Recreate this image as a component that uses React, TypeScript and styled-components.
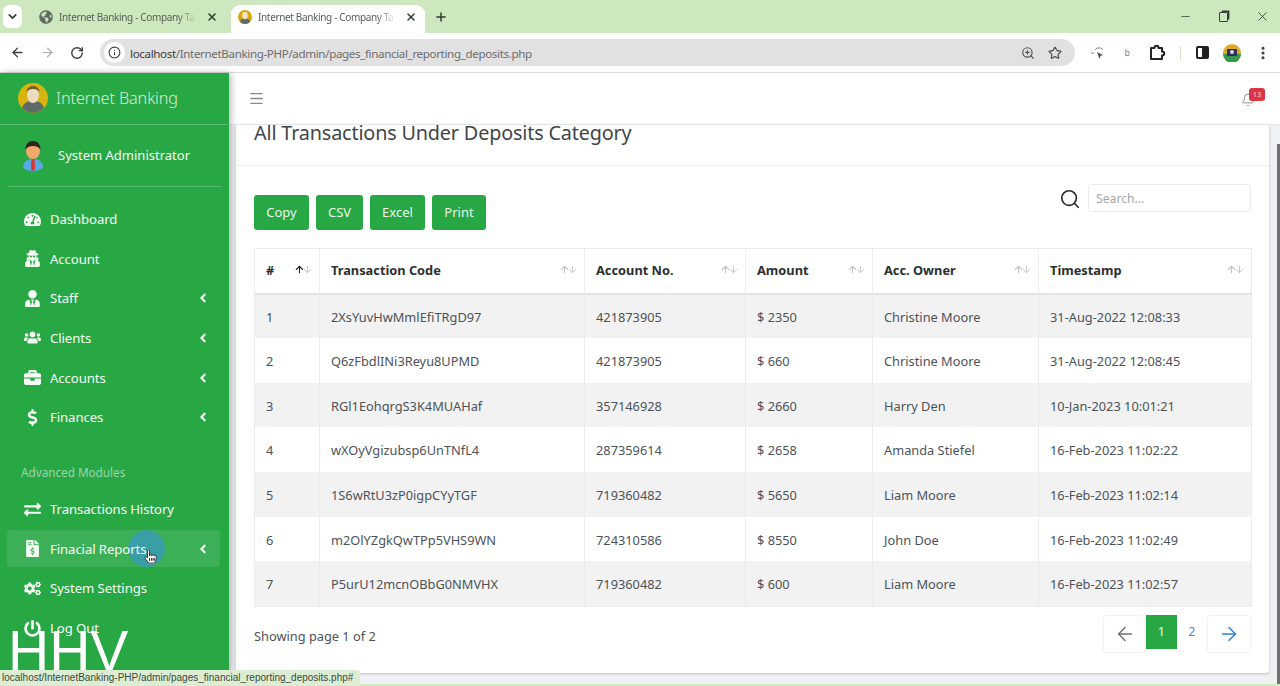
import styled, { createGlobalStyle } from "styled-components";
import {
  ArrowLeft,
  ArrowRight,
  ArrowUp,
  ArrowDown,
  ChevronDown,
  Info,
  Menu,
  Minus,
  MoreVertical,
  Plus,
  RotateCw,
  Search,
  Star,
  X,
  ZoomIn,
  Bell,
} from "lucide-react";
import {
  FaAngleLeft,
  FaBriefcase,
  FaCogs,
  FaDollarSign,
  FaExchangeAlt,
  FaFileInvoiceDollar,
  FaGlobeAmericas,
  FaHandPointer,
  FaPowerOff,
  FaTachometerAlt,
  FaUserSecret,
  FaUserTie,
  FaUsers,
} from "react-icons/fa";

const GlobalStyle = createGlobalStyle`
  html, body { margin: 0; padding: 0; height: 100%; overflow: hidden; background: #fff; }
  #root { height: 100%; }
  * { box-sizing: border-box; }
  body { font-family: "Noto Sans", "Open Sans", sans-serif; }
`;

const rows = [
  ["1", "2XsYuvHwMmlEfiTRgD97", "421873905", "$ 2350", "Christine Moore", "31-Aug-2022 12:08:33"],
  ["2", "Q6zFbdlINi3Reyu8UPMD", "421873905", "$ 660", "Christine Moore", "31-Aug-2022 12:08:45"],
  ["3", "RGl1EohqrgS3K4MUAHaf", "357146928", "$ 2660", "Harry Den", "10-Jan-2023 10:01:21"],
  ["4", "wXOyVgizubsp6UnTNfL4", "287359614", "$ 2658", "Amanda Stiefel", "16-Feb-2023 11:02:22"],
  ["5", "1S6wRtU3zP0igpCYyTGF", "719360482", "$ 5650", "Liam Moore", "16-Feb-2023 11:02:14"],
  ["6", "m2OlYZgkQwTPp5VHS9WN", "724310586", "$ 8550", "John Doe", "16-Feb-2023 11:02:49"],
  ["7", "P5urU12mcnOBbG0NMVHX", "719360482", "$ 600", "Liam Moore", "16-Feb-2023 11:02:57"],
];

const heads = ["#", "Transaction Code", "Account No.", "Amount", "Acc. Owner", "Timestamp"];
const colWidths = [65, 265, 161, 127, 166, 213];

const Page = styled.div`
  height: 686px;
  display: flex;
  flex-direction: column;
  position: relative;
  overflow: hidden;
`;

const TabStrip = styled.div`
  height: 33px;
  flex: none;
  background: #cde7bf;
  display: flex;
  align-items: flex-end;
  padding-left: 3px;
  color: #2b3a2b;
`;

const TabSearch = styled.div`
  width: 19px;
  height: 23px;
  margin-bottom: 5px;
  background: #fff;
  border-radius: 6px;
  display: flex;
  align-items: center;
  justify-content: center;
  margin-right: 9px;
`;

const Tab = styled.div<{ $active?: boolean }>`
  width: ${(p) => (p.$active ? "194px" : "200px")};
  height: 28px;
  display: flex;
  align-items: center;
  padding: 0 0 5px ${(p) => (p.$active ? "7px" : "8px")};
  border-radius: 9px 9px 0 0;
  background: ${(p) => (p.$active ? "#fff" : "transparent")};
`;

const TabTitle = styled.span`
  width: 138px;
  margin-left: 6px;
  margin-right: 9px;
  font-size: 10px;
  letter-spacing: -0.35px;
  color: #555f55;
  white-space: nowrap;
  -webkit-mask-image: linear-gradient(to right, #000 86%, transparent);
  mask-image: linear-gradient(to right, #000 86%, transparent);
`;

const NewTab = styled.div`
  margin: 0 0 9px 9px;
  display: flex;
`;

const WindowControls = styled.div`
  margin-left: auto;
  display: flex;
  align-items: center;
  gap: 24px;
  padding-right: 10px;
  height: 33px;
  align-self: flex-end;
`;

const RestoreIcon = styled.div`
  width: 9px;
  height: 10px;
  border: 1.4px solid #33413a;
  border-radius: 1px;
  box-shadow: 2px -2px 0 -0.6px #33413a;
  margin: 0 3px;
`;

const Toolbar = styled.div`
  height: 40px;
  flex: none;
  background: #fff;
  border-radius: 8px 8px 0 0;
  border-bottom: 1px solid #dcdcdc;
  display: flex;
  align-items: center;
  padding: 0 9px;
  color: #3d3d3d;
`;

const NavIcon = styled.div<{ $w?: number; $muted?: boolean }>`
  width: ${(p) => p.$w ?? 16}px;
  display: flex;
  justify-content: center;
  color: ${(p) => (p.$muted ? "#a8a8a8" : "#3d3d3d")};
  flex: none;
`;

const AddressBar = styled.div`
  width: 975px;
  height: 27px;
  margin-left: 15px;
  background: #e1e1e1;
  border-radius: 14px;
  display: flex;
  align-items: center;
  padding: 0 13px 0 4px;
  flex: none;
`;

const InfoBadge = styled.div`
  width: 21px;
  height: 21px;
  border-radius: 50%;
  background: #fff;
  display: flex;
  align-items: center;
  justify-content: center;
  margin-right: 5px;
`;

const Url = styled.span`
  font-size: 11.6px;
  padding-top: 1px;
  color: #6d6d6d;
  letter-spacing: -0.36px;
  b {
    font-weight: 400;
    color: #3b3b3b;
  }
`;

const AddressActions = styled.div`
  margin-left: auto;
  display: flex;
  gap: 13px;
  color: #555;
`;

const ToolIcons = styled.div`
  display: flex;
  align-items: center;
  margin-left: 15px;
  flex: 1;
  justify-content: space-between;
`;

const FaintExt = styled.span`
  width: 14px;
  text-align: center;
  font-size: 9px;
  color: #8a8a8a;
`;

const Divider = styled.div`
  width: 1px;
  height: 14px;
  background: #cfe3c5;
`;

const PanelIcon = styled.div`
  width: 13px;
  height: 13px;
  border: 2px solid #222;
  border-radius: 2px;
  background: linear-gradient(to right, transparent 45%, #222 45%);
`;

const Body = styled.div`
  flex: 1;
  min-height: 0;
  display: flex;
`;

const Sidebar = styled.aside`
  width: 229px;
  flex: none;
  background: #28a745;
  color: #fff;
  position: relative;
  z-index: 2;
  box-shadow: 2px 0 7px rgba(0, 0, 0, 0.28);
`;

const Brand = styled.div`
  height: 52px;
  display: flex;
  align-items: center;
  padding: 0 0 1px 18px;
  gap: 8px;
  border-bottom: 1px solid rgba(255, 255, 255, 0.22);
  font-size: 16.2px;
  font-weight: 300;
  color: #d6eedb;
  letter-spacing: -0.1px;
`;

const UserPanel = styled.div`
  height: 62px;
  margin: 0 7px;
  display: flex;
  align-items: center;
  gap: 9px;
  padding: 0 0 2px 10px;
  border-bottom: 1px solid rgba(255, 255, 255, 0.22);
  font-size: 13px;
  color: #f2faf3;
`;

const Nav = styled.nav`
  padding: 12.4px 9px 0 7px;
`;

const NavItem = styled.div<{ $active?: boolean }>`
  height: ${(p) => (p.$active ? "37px" : "39.6px")};
  margin: ${(p) => (p.$active ? "1.3px 0" : "0")};
  display: flex;
  align-items: center;
  padding: 0 10px 0 14px;
  border-radius: 4px;
  position: relative;
  font-size: 13.2px;
  color: #f4fbf5;
  background: ${(p) => (p.$active ? "rgba(255,255,255,0.1)" : "transparent")};
`;

const NavGlyph = styled.span`
  width: 22px;
  display: flex;
  justify-content: center;
  margin-right: 7px;
  font-size: 17px;
`;

const NavLabel = styled.span`
  position: relative;
  z-index: 1;
  letter-spacing: -0.1px;
`;

const Caret = styled.span`
  margin-left: auto;
  display: flex;
  font-size: 14px;
`;

const NavHeader = styled.div`
  padding: 26px 0 9px 14px;
  height: 52.5px;
  font-size: 11.8px;
  color: #9ad6a9;
  letter-spacing: -0.05px;
  display: flex;
  align-items: flex-end;
`;

const ClickRing = styled.span`
  position: absolute;
  left: 121px;
  top: 0;
  width: 37px;
  height: 37px;
  border-radius: 50%;
  background: #3a9ea6;
`;

const Pointer = styled.span`
  position: absolute;
  left: 137px;
  top: 20px;
  z-index: 2;
  color: #fff;
  display: flex;
  svg path {
    stroke: #111;
    stroke-width: 30px;
  }
`;

const Main = styled.main`
  flex: 1;
  min-width: 0;
  display: flex;
  flex-direction: column;
  background: #f0f1f4;
`;

const TopBar = styled.header`
  height: 52px;
  flex: none;
  background: #fff;
  border-bottom: 1px solid #e8e9eb;
  display: flex;
  align-items: center;
  justify-content: space-between;
  padding: 0 25px 0 19px;
  color: #8a8a8a;
`;

const BellWrap = styled.div`
  position: relative;
  display: flex;
  margin-top: 2px;
`;

const Badge = styled.span`
  position: absolute;
  left: 8px;
  top: -5px;
  width: 16px;
  height: 13px;
  border-radius: 3px;
  background: #dc3545;
  color: #f9d6da;
  font-size: 7.5px;
  display: flex;
  align-items: center;
  justify-content: center;
`;

const Scroller = styled.div`
  flex: 1;
  min-height: 0;
  display: flex;
  position: relative;
  padding: 0 11px 11px 7px;
  border-bottom: 2px solid #cdeebd;
`;

const ScrollThumb = styled.div`
  position: absolute;
  right: 0;
  top: 19px;
  bottom: 0;
  width: 3px;
  background: #707070;
`;

const Card = styled.section`
  flex: 1;
  background: #fff;
  border-radius: 0 0 3px 3px;
  box-shadow: 0 1px 3px rgba(0, 0, 0, 0.22);
  display: flex;
  flex-direction: column;
  min-width: 0;
`;

const CardHeader = styled.div`
  height: 41px;
  flex: none;
  padding-left: 18px;
  border-bottom: 1px solid #f0f0f0;
`;

const Title = styled.h3`
  margin: -2px 0 0;
  font-size: 19.8px;
  font-weight: 400;
  line-height: 19px;
  color: #3f4549;
  letter-spacing: -0.16px;
`;

const CardBody = styled.div`
  padding: 18px 18px 0;
`;

const TableTools = styled.div`
  height: 46px;
  display: flex;
  justify-content: space-between;
`;

const ButtonGroup = styled.div`
  display: flex;
  align-items: flex-end;
  gap: 7px;
`;

const ExportButton = styled.button<{ $w: number }>`
  width: ${(p) => p.$w}px;
  height: 35px;
  border: none;
  border-radius: 3px;
  padding: 0 0 2px;
  background: #28a745;
  color: #e8f6eb;
  font-family: inherit;
  font-size: 13px;
`;

const SearchBox = styled.div`
  display: flex;
  align-items: flex-start;
  gap: 7px;
  color: #2a2a2a;
`;

const SearchIconWrap = styled.span`
  display: flex;
  margin-top: 4px;
`;

const SearchInput = styled.div`
  width: 163px;
  height: 28px;
  border: 1px solid #eceded;
  border-radius: 3px;
  padding-left: 7px;
  display: flex;
  align-items: center;
  font-size: 12.2px;
  color: #a3a7ab;
`;

const Table = styled.table`
  width: 997px;
  margin-top: 18px;
  border-collapse: collapse;
  table-layout: fixed;
  font-size: 12.8px;
  border: 1px solid #e9ecef;
`;

const Th = styled.th`
  height: 45px;
  padding: 0 6px 2px 11px;
  text-align: left;
  border-left: 1px solid #eceef0;
  border-bottom: 2px solid #e2e4e6;
  color: #2b2f33;
  font-weight: 700;
  font-size: 12.8px;
`;

const HeadInner = styled.div`
  display: flex;
  align-items: center;
  justify-content: space-between;
`;

const SortMarks = styled.span`
  display: flex;
`;

const SortArrow = styled.span<{ $on?: boolean }>`
  display: flex;
  margin-left: -3px;
  color: ${(p) => (p.$on ? "#212529" : "#bfc3c6")};
`;

const Tr = styled.tr`
  &:nth-child(odd) {
    background: #f2f2f2;
  }
`;

const Td = styled.td`
  height: 44.67px;
  padding: 1px 11px 0;
  border-left: 1px solid #e9ebed;
  color: #4d5358;
  white-space: nowrap;
`;

const TableFooter = styled.div`
  display: flex;
  justify-content: space-between;
  align-items: center;
  margin-top: 8px;
`;

const PageInfo = styled.div`
  font-size: 12.8px;
  margin-top: 5px;
  color: #4d5358;
`;

const Pager = styled.div`
  display: flex;
  align-items: flex-start;
  height: 38px;
`;

const PagerEnd = styled.div<{ $w: number; $color: string }>`
  width: ${(p) => p.$w}px;
  height: 38px;
  border: 1px solid #f1f2f3;
  border-radius: 3px;
  display: flex;
  align-items: center;
  justify-content: center;
  color: ${(p) => p.$color};
`;

const PagerNum = styled.div<{ $active?: boolean }>`
  width: 30.5px;
  height: 34px;
  display: flex;
  align-items: center;
  justify-content: center;
  font-size: 12.5px;
  background: ${(p) => (p.$active ? "#28a745" : "#fff")};
  color: ${(p) => (p.$active ? "#e8f6eb" : "#5f83bd")};
`;

const Watermark = styled.div`
  position: absolute;
  left: 8px;
  top: 619px;
  z-index: 3;
  font-family: "Liberation Sans", Arial, sans-serif;
  font-size: 57px;
  line-height: 64px;
  color: #fff;
  pointer-events: none;
`;

const StatusBubble = styled.div`
  position: absolute;
  left: 0;
  bottom: 0;
  width: 360px;
  height: 16px;
  z-index: 4;
  background: #dcedd3;
  border-radius: 0 3px 0 0;
  font-family: "Liberation Sans", Arial, sans-serif;
  font-size: 10px;
  line-height: 16px;
  padding-left: 2px;
  color: #3a4a3a;
  white-space: nowrap;
`;

const BrandLogo = () => (
  <svg width="30" height="30" viewBox="0 0 30 30">
    <circle cx="15" cy="15" r="15" fill="#d6b40d" />
    <path d="M4 25c2-6 6-7 11-7s9 1 11 7a15 15 0 0 1-22 0z" fill="#5f6b66" />
    <ellipse cx="15" cy="12" rx="6" ry="8" fill="#e9dcc0" />
    <path d="M8.500 10c0-5 3-7 6.500-7s6.500 2 6.500 7c-1-3-3-4-6.500-4s-5.500 1-6.500 4z" fill="#7a5a2c" />
  </svg>
);

const TabFavicon = () => (
  <svg width="14" height="14" viewBox="0 0 30 30">
    <circle cx="15" cy="15" r="15" fill="#d6a80d" />
    <path d="M4 25c2-6 6-7 11-7s9 1 11 7a15 15 0 0 1-22 0z" fill="#5f6b66" />
    <ellipse cx="15" cy="12" rx="6" ry="8" fill="#f0e2c6" />
  </svg>
);

const AdminAvatar = () => (
  <svg width="32" height="36" viewBox="0 0 32 36">
    <path d="M1 19a15 15 0 0 0 30 0 15 15 0 0 1-30 0z" fill="#1f8f3a" />
    <path d="M6 31c0-6 4-9 10-9s10 3 10 9c-3 2-6 3-10 3s-7-1-10-3z" fill="#5aa9e6" />
    <path d="M14.500 22h3l.6 10-2.100 2-2.100-2z" fill="#d93636" />
    <ellipse cx="16" cy="14" rx="7" ry="8" fill="#f1a86b" />
    <path d="M8.500 13c0-6 3-9 7.500-9s7.500 3 7.500 9c-1.500-3-4-4-7.500-4s-6 1-7.500 4z" fill="#2d2320" />
  </svg>
);

const ProfileDot = () => (
  <svg width="18" height="18" viewBox="0 0 18 18">
    <circle cx="9" cy="9" r="9" fill="#e0a92a" />
    <path d="M0 10a9 9 0 0 0 18 0z" fill="#3a9a4a" />
    <rect x="4" y="5" width="10" height="7" fill="#2b3560" />
    <circle cx="9" cy="8" r="2" fill="#d8d8e8" />
  </svg>
);

const PuzzleIcon = () => (
  <svg width="18" height="18" viewBox="0 0 18 18" fill="none" stroke="#222" strokeWidth="2" strokeLinejoin="round">
    <path d="M3 4h3.500c0-3 4-3 4 0H14v3.500c3 0 3 4 0 4V15H3z" />
  </svg>
);

const CursorExt = () => (
  <svg width="16" height="14" viewBox="0 0 16 14" fill="none" stroke="#8a8a8a" strokeWidth="1">
    <path d="M1 7h3M5 4l2-2h4l2 2" />
    <path d="M7 6l6 3-2.500 1-1 3z" fill="#555" stroke="none" />
  </svg>
);

function NavEntry({
  icon,
  label,
  caret,
  active,
}: {
  icon: React.ReactNode;
  label: string;
  caret?: boolean;
  active?: boolean;
}) {
  return (
    <NavItem $active={active}>
      <NavGlyph>{icon}</NavGlyph>
      {active && <ClickRing />}
      <NavLabel>{label}</NavLabel>
      {active && (
        <Pointer>
          <FaHandPointer size={13} />
        </Pointer>
      )}
      {caret && (
        <Caret>
          <FaAngleLeft />
        </Caret>
      )}
    </NavItem>
  );
}

export default function App() {
  return (
    <Page>
      <GlobalStyle />
      <TabStrip>
        <TabSearch>
          <ChevronDown size={13} strokeWidth={3} />
        </TabSearch>
        <Tab>
          <FaGlobeAmericas size={14} color="#5f6b62" />
          <TabTitle>Internet Banking - Company Ta</TabTitle>
          <X size={12} strokeWidth={3} />
        </Tab>
        <Tab $active>
          <TabFavicon />
          <TabTitle>Internet Banking - Company Ta</TabTitle>
          <X size={12} strokeWidth={3} />
        </Tab>
        <NewTab>
          <Plus size={14} strokeWidth={2.5} />
        </NewTab>
        <WindowControls>
          <Minus size={13} strokeWidth={1.3} />
          <RestoreIcon />
          <X size={15} strokeWidth={1.3} />
        </WindowControls>
      </TabStrip>
      <Toolbar>
        <NavIcon>
          <ArrowLeft size={15} strokeWidth={2.2} />
        </NavIcon>
        <NavIcon $w={44} $muted>
          <ArrowRight size={15} strokeWidth={1.8} />
        </NavIcon>
        <NavIcon>
          <RotateCw size={14} strokeWidth={2.4} />
        </NavIcon>
        <AddressBar>
          <InfoBadge>
            <Info size={13} strokeWidth={2} />
          </InfoBadge>
          <Url>
            <b>localhost</b>/InternetBanking-PHP/admin/pages_financial_reporting_deposits.php
          </Url>
          <AddressActions>
            <ZoomIn size={14} strokeWidth={2} />
            <Star size={14} strokeWidth={2.2} />
          </AddressActions>
        </AddressBar>
        <ToolIcons>
          <CursorExt />
          <FaintExt>ɓ</FaintExt>
          <PuzzleIcon />
          <Divider />
          <PanelIcon />
          <ProfileDot />
          <MoreVertical size={16} strokeWidth={2.6} />
        </ToolIcons>
      </Toolbar>
      <Body>
        <Sidebar>
          <Brand>
            <BrandLogo />
            Internet Banking
          </Brand>
          <UserPanel>
            <AdminAvatar />
            System Administrator
          </UserPanel>
          <Nav>
            <NavEntry icon={<FaTachometerAlt />} label="Dashboard" />
            <NavEntry icon={<FaUserSecret />} label="Account" />
            <NavEntry icon={<FaUserTie />} label="Staff" caret />
            <NavEntry icon={<FaUsers />} label="Clients" caret />
            <NavEntry icon={<FaBriefcase />} label="Accounts" caret />
            <NavEntry icon={<FaDollarSign />} label="Finances" caret />
            <NavHeader>Advanced Modules</NavHeader>
            <NavEntry icon={<FaExchangeAlt />} label="Transactions History" />
            <NavEntry icon={<FaFileInvoiceDollar />} label="Finacial Reports" caret active />
            <NavEntry icon={<FaCogs />} label="System Settings" />
            <NavEntry icon={<FaPowerOff />} label="Log Out" />
          </Nav>
        </Sidebar>
        <Main>
          <TopBar>
            <Menu size={17} strokeWidth={1.8} />
            <BellWrap>
              <Bell size={14} strokeWidth={1.6} />
              <Badge>13</Badge>
            </BellWrap>
          </TopBar>
          <Scroller>
            <Card>
              <CardHeader>
                <Title>All Transactions Under Deposits Category</Title>
              </CardHeader>
              <CardBody>
                <TableTools>
                  <ButtonGroup>
                    <ExportButton $w={55}>Copy</ExportButton>
                    <ExportButton $w={47}>CSV</ExportButton>
                    <ExportButton $w={55}>Excel</ExportButton>
                    <ExportButton $w={54}>Print</ExportButton>
                  </ButtonGroup>
                  <SearchBox>
                    <SearchIconWrap>
                      <Search size={22} strokeWidth={1.8} />
                    </SearchIconWrap>
                    <SearchInput>Search...</SearchInput>
                  </SearchBox>
                </TableTools>
                <Table>
                  <colgroup>
                    {colWidths.map((w) => (
                      <col key={w} style={{ width: w }} />
                    ))}
                  </colgroup>
                  <thead>
                    <tr>
                      {heads.map((h, i) => (
                        <Th key={h}>
                          <HeadInner>
                            {h}
                            <SortMarks>
                              <SortArrow $on={i === 0}>
                                <ArrowUp size={11} strokeWidth={2.4} />
                              </SortArrow>
                              <SortArrow>
                                <ArrowDown size={11} strokeWidth={2} />
                              </SortArrow>
                            </SortMarks>
                          </HeadInner>
                        </Th>
                      ))}
                    </tr>
                  </thead>
                  <tbody>
                    {rows.map((row) => (
                      <Tr key={row[0]}>
                        {row.map((cell, i) => (
                          <Td key={i}>{cell}</Td>
                        ))}
                      </Tr>
                    ))}
                  </tbody>
                </Table>
                <TableFooter>
                  <PageInfo>Showing page 1 of 2</PageInfo>
                  <Pager>
                    <PagerEnd $w={43} $color="#6c7075">
                      <ArrowLeft size={22} strokeWidth={1.5} />
                    </PagerEnd>
                    <PagerNum $active>1</PagerNum>
                    <PagerNum>2</PagerNum>
                    <PagerEnd $w={44} $color="#2f7fd8">
                      <ArrowRight size={22} strokeWidth={1.6} />
                    </PagerEnd>
                  </Pager>
                </TableFooter>
              </CardBody>
            </Card>
            <ScrollThumb />
          </Scroller>
        </Main>
      </Body>
      <Watermark>HHV</Watermark>
      <StatusBubble>localhost/InternetBanking-PHP/admin/pages_financial_reporting_deposits.php#</StatusBubble>
    </Page>
  );
}
